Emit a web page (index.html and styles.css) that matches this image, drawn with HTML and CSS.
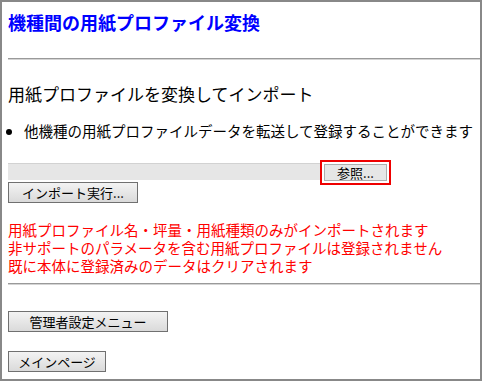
FILE: index.html
```html
<!DOCTYPE html>
<html lang="ja">
<head>
<meta charset="UTF-8" />
<meta name="viewport" content="width=device-width, initial-scale=1" />
<title>機種間の用紙プロファイル変換</title>
<link rel="stylesheet" href="styles.css">
</head>
<body>
  <div class="page">
    <h1 class="title">機種間の用紙プロファイル変換</h1>
    <hr class="rule rule-top" />

    <h2 class="heading">用紙プロファイルを変換してインポート</h2>
    <ul class="notes">
      <li>他機種の用紙プロファイルデータを転送して登録することができます</li>
    </ul>

    <form class="import-form" aria-label="用紙プロファイルのインポート">
      <div class="file-row">
        <div class="file-path"></div>
        <span class="browse-frame">
          <button type="button" class="btn btn-browse">参照...</button>
        </span>
      </div>
      <button type="submit" class="btn btn-import">インポート実行...</button>
    </form>

    <div class="warning">
      <p>用紙プロファイル名・坪量・用紙種類のみがインポートされます</p>
      <p>非サポートのパラメータを含む用紙プロファイルは登録されません</p>
      <p>既に本体に登録済みのデータはクリアされます</p>
    </div>

    <hr class="rule rule-bottom" />

    <div class="nav">
      <button type="button" class="btn btn-admin">管理者設定メニュー</button>
      <button type="button" class="btn btn-main">メインページ</button>
    </div>
  </div>
</body>
</html>
```

FILE: styles.css
```css
/* Reset */
* {
  box-sizing: border-box;
}

body {
  margin: 0;
  font-family: "Noto Sans CJK JP", "DejaVu Sans", sans-serif;
  background: #fff;
  color: #000;
}

.page {
  width: 482px;
  height: 381px;
  border: 2px solid #888;
  padding: 0 0 0 6px;
  overflow: hidden;
}

.title {
  margin: 0;
  padding-top: 10px;
  font-size: 18px;
  line-height: 20px;
  font-weight: bold;
  color: #0000ff;
}

.rule {
  margin: 0;
  border: 0;
  height: 2px;
  border-top: 1px solid #9a9a9a;
  border-bottom: 1px solid #d4d4d4;
}

.rule-top {
  margin-top: 26px;
}

.heading {
  margin: 24px 0 0;
  font-size: 17px;
  line-height: 20px;
  font-weight: normal;
}

.notes {
  margin: 18px 0 0;
  padding-left: 16px;
  font-size: 14.5px;
  line-height: 18px;
}

.import-form {
  margin-top: 23px;
}

.file-row {
  display: flex;
  align-items: center;
}

.file-path {
  width: 312px;
  height: 17px;
  background: #e6e6e6;
  border-top: 1px solid #d2d2d2;
}

.browse-frame {
  display: flex;
  border: 2px solid #ee0000;
  padding: 2px;
  margin: -4px 0 -5px;
}

.btn {
  display: block;
  padding: 0;
  font-family: inherit;
  font-size: 13px;
  color: #000;
  text-align: center;
  cursor: pointer;
  border: 1px solid #707070;
  background: linear-gradient(#f3f3f3, #dadada);
  height: 21px;
  line-height: 19px;
}

.btn-browse {
  width: 63px;
  height: 17px;
  line-height: 15px;
  border-color: #adadad;
  background: #e6e6e6;
}

.btn-import {
  width: 130px;
  margin-top: 2px;
}

.warning {
  margin-top: 18px;
  font-size: 14.5px;
  line-height: 18px;
  color: #ff0000;
}

.warning p {
  margin: 0;
  height: 18px;
}

.rule-bottom {
  margin-top: 8px;
}

.nav {
  display: flex;
  flex-direction: column;
  align-items: flex-start;
  gap: 19px;
  margin-top: 26px;
}

.btn-admin {
  width: 160px;
}

.btn-main {
  width: 98px;
}
```
